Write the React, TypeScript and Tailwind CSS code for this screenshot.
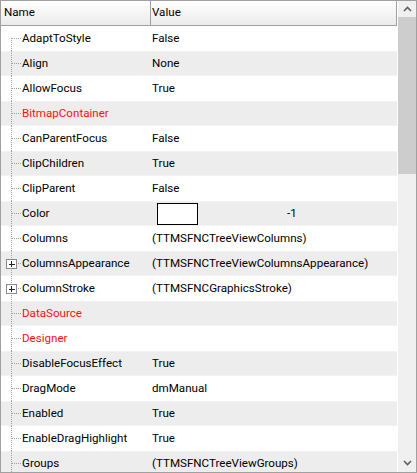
import React from "react";

type Row = {
  name: string;
  value?: string;
  red?: boolean;
  expand?: boolean;
  color?: boolean;
};

const ROWS: Row[] = [
  { name: "AdaptToStyle", value: "False" },
  { name: "Align", value: "None" },
  { name: "AllowFocus", value: "True" },
  { name: "BitmapContainer", red: true },
  { name: "CanParentFocus", value: "False" },
  { name: "ClipChildren", value: "True" },
  { name: "ClipParent", value: "False" },
  { name: "Color", value: "-1", color: true },
  { name: "Columns", value: "(TTMSFNCTreeViewColumns)" },
  { name: "ColumnsAppearance", value: "(TTMSFNCTreeViewColumnsAppearance)", expand: true },
  { name: "ColumnStroke", value: "(TTMSFNCGraphicsStroke)", expand: true },
  { name: "DataSource", red: true },
  { name: "Designer", red: true },
  { name: "DisableFocusEffect", value: "True" },
  { name: "DragMode", value: "dmManual" },
  { name: "Enabled", value: "True" },
  { name: "EnableDragHighlight", value: "True" },
  { name: "Groups", value: "(TTMSFNCTreeViewGroups)" },
];

function TreeLines({ first, expand }: { first: boolean; expand?: boolean }) {
  return (
    <svg width="21" height="25" className="shrink-0" shapeRendering="crispEdges">
      {!expand && (
        <line
          x1="10.5"
          y1={first ? 12 : 0}
          x2="10.5"
          y2="25"
          stroke="#a0a0a0"
          strokeDasharray="1 1"
        />
      )}
      {expand && (
        <>
          <line x1="10.5" y1="0" x2="10.5" y2="8" stroke="#a0a0a0" strokeDasharray="1 1" />
          <line x1="10.5" y1="17" x2="10.5" y2="25" stroke="#a0a0a0" strokeDasharray="1 1" />
        </>
      )}
      <line
        x1={expand ? 15 : 11}
        y1="12.5"
        x2="21"
        y2="12.5"
        stroke="#a0a0a0"
        strokeDasharray="1 1"
      />
      {expand && (
        <>
          <rect x="5.5" y="8.5" width="10" height="9" fill="#fff" stroke="#8a8a8a" />
          <line x1="8" y1="13" x2="14" y2="13" stroke="#222" />
          <line x1="10.5" y1="10" x2="10.5" y2="16" stroke="#222" />
        </>
      )}
    </svg>
  );
}

function Chevron({ down }: { down?: boolean }) {
  return (
    <svg width="9" height="6" viewBox="0 0 9 6">
      <path
        d={down ? "M1 1 L4.5 4.5 L8 1" : "M1 5 L4.5 1.5 L8 5"}
        fill="none"
        stroke="#606060"
        strokeWidth="1.6"
      />
    </svg>
  );
}

export default function App() {
  return (
    <div
      className="w-[417px] h-[473px] border border-[#a0a0a0] bg-white flex overflow-hidden text-[11.6px] text-black"
      style={{ fontFamily: "Roboto, 'Noto Sans', sans-serif" }}
    >
      <div className="w-[397px] flex flex-col overflow-hidden">
        <div className="h-[25px] shrink-0 flex border-b border-r border-[#a0a0a0] bg-gradient-to-b from-white to-[#ebebeb]">
          <div className="w-[150px] border-r border-[#a0a0a0] pl-[3px] flex items-center">Name</div>
          <div className="flex-1 pl-[1px] flex items-center">Value</div>
        </div>
        <div className="flex flex-col">
          {ROWS.map((r, i) => (
            <div
              key={r.name}
              className={
                "h-[25px] shrink-0 flex items-center w-[396px] " +
                (i % 2 === 1 ? "bg-[#eeeded] border-y border-[#f4f3f3]" : "bg-white")
              }
            >
              <div className="w-[151px] flex items-center">
                <TreeLines first={i === 0} expand={r.expand} />
                <span className={r.red ? "text-[#ff0d0d]" : ""}>{r.name}</span>
              </div>
              <div className="flex-1 flex items-center">
                {r.color ? (
                  <>
                    <div className="ml-[5px] w-[41px] h-[22px] border border-black bg-white" />
                    <span className="ml-[89px]">{r.value}</span>
                  </>
                ) : (
                  <span>{r.value}</span>
                )}
              </div>
            </div>
          ))}
        </div>
      </div>
      <div className="w-[18px] ml-[1px] bg-[#f0f0f0] flex flex-col">
        <div className="h-[16px] flex items-center justify-center">
          <Chevron />
        </div>
        <div className="h-[157px] bg-[#cdcdcd]" />
        <div className="flex-1" />
        <div className="h-[18px] flex items-center justify-center">
          <Chevron down />
        </div>
      </div>
    </div>
  );
}
